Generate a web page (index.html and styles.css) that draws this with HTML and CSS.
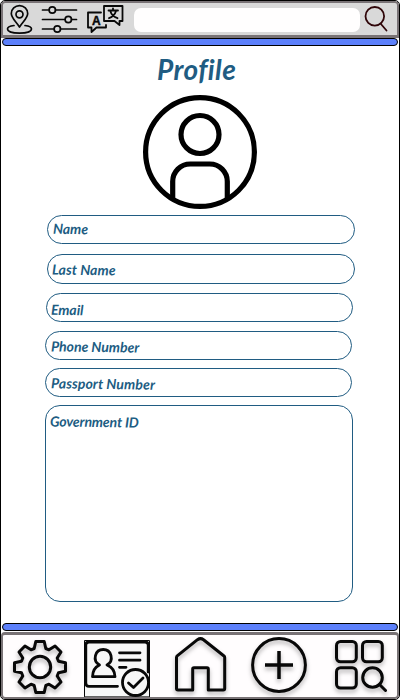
FILE: index.html
```html
<!DOCTYPE html>
<html lang="en">
<head>
<meta charset="utf-8">
<title>Profile</title>
<link rel="stylesheet" href="styles.css">
</head>
<body>
<div class="phone">
  <header class="topbar">
    <svg class="tools" width="130" height="32" viewBox="3 3 130 32" aria-hidden="true">
      <g class="line thin">
        <path d="M19.500 27C16 21.500 11.300 18 11.300 13.500a8.200 7.900 0 0 1 16.400 0C27.700 18 23 21.500 19.500 27Z"/>
        <circle cx="19.500" cy="14.300" r="3.500"/>
        <path d="M14 25.500C9.500 26 7.500 27.500 7.500 29c0 2.500 5 4.200 12 4.200s12-1.700 12-4.200c0-1.500-2-3-6.500-3.500"/>
        <path d="M42.500 10H49M55.500 10H76.500M42.500 19.500H65M71.500 19.500H76.500M42.500 29H54M60.500 29H76.500"/>
        <circle cx="52.300" cy="10" r="3.200"/><circle cx="68.300" cy="19.500" r="3.200"/><circle cx="57.300" cy="29" r="3.200"/>
      </g>
      <g class="line translate">
        <path d="M101 12.500H88V27.500H91.500V32L96.500 27.500H106V25"/>
        <path d="M104 6H122.500V21H119.500V25L114.500 21H104Z"/>
        <path d="M108.500 10.500H118M113 8.500V10.500M116 11C115 14.500 112 17 109 18.200M110.500 11.500C111.500 15 114 17 117.500 18.200"/>
      </g>
      <text class="letter" x="92" y="24.500">A</text>
    </svg>
    <div class="search"></div>
    <svg class="magnifier" width="26" height="28" viewBox="363 5 26 28" aria-hidden="true">
      <circle cx="374.800" cy="16.300" r="9.300"/>
      <path d="M380.500 23.500L386.500 30.500"/>
    </svg>
  </header>
  <div class="stripe"></div>

  <main class="profile">
    <h1>Profile</h1>
    <svg class="avatar" width="114" height="114" viewBox="0 0 114 114" aria-hidden="true">
      <circle cx="57" cy="57" r="54.400"/>
      <circle cx="57" cy="39.500" r="19"/>
      <path d="M29.700 104V86.500A17.500 17.500 0 0 1 47.200 69H66.800A17.500 17.500 0 0 1 84.300 86.500V104"/>
    </svg>
    <div class="field name"><span>Name</span></div>
    <div class="field last"><span>Last Name</span></div>
    <div class="field email"><span>Email</span></div>
    <div class="field phone-no"><span>Phone Number</span></div>
    <div class="field passport"><span>Passport Number</span></div>
    <div class="field government"><span>Government ID</span></div>
  </main>

  <div class="stripe"></div>
  <nav class="bottombar">
    <svg class="icon gear" width="56" height="62" viewBox="12 635 56 62" aria-hidden="true">
      <g transform="translate(40 667)">
        <path d="M-5.800-18.500L-4.200-25.500H4.200L5.800-18.500 8.980-17.200 15.060-21 21-15.060 17.200-8.980 18.500-5.800 25.500-4.200V4.200L18.500 5.800 17.200 8.980 21 15.060 15.060 21 8.980 17.200 5.800 18.500 4.200 25.500H-4.200L-5.800 18.500-8.980 17.200-15.060 21-21 15.060-17.200 8.980-18.500 5.800-25.500 4.200V-4.200L-18.500-5.800-17.200-8.980-21-15.060-15.060-21-8.980-17.200Z"/>
        <circle r="10.700"/>
      </g>
    </svg>
    <svg class="icon card" width="66" height="57" viewBox="84 640 66 57" aria-hidden="true">
      <path class="box" d="M84.500 696.500V640.500H149.500V696.500Z"/>
      <path d="M117.500 686.300H89Q85.800 686.300 85.800 683V645Q85.800 642 89 642H145Q148.200 642 148.200 645V672"/>
      <path d="M119.500 652.800H140M119.500 660.200H140M119.500 667.300H126"/>
      <path d="M99.500 665C92 660.500 95 649.500 103.200 649.500S114.500 660.500 107 665C112 667 114.800 670.500 115 676.700H92.500C92.700 670.500 95 667 99.500 665Z"/>
      <circle cx="135.500" cy="682.500" r="13"/>
      <path d="M128.500 683L133.500 687.500 143 678"/>
    </svg>
    <svg class="icon home" width="54" height="60" viewBox="173 635 54 60" aria-hidden="true">
      <path d="M176.500 688.500V657.500Q176.500 656.500 177.500 655.700L197.500 639.700Q200.500 637.500 203.500 639.700L223.700 655.700Q224.700 656.500 224.700 657.500V688.500Q224.700 690 223.200 690H208.300V669Q208.300 667.700 207 667.700H194Q192.700 667.700 192.700 669V690H178Q176.500 690 176.500 688.500Z"/>
    </svg>
    <svg class="icon plus" width="58" height="60" viewBox="250 635 58 60" aria-hidden="true">
      <circle cx="279" cy="665" r="26.400"/>
      <path d="M265 665H293M279 651V679"/>
    </svg>
    <svg class="icon grid" width="56" height="62" viewBox="333 635 56 62" aria-hidden="true">
      <rect x="336.500" y="641.500" width="19.800" height="20.300" rx="4"/>
      <rect x="362.500" y="641.500" width="19.800" height="20.300" rx="4"/>
      <rect x="336.500" y="667.700" width="19.800" height="20.300" rx="4"/>
      <circle cx="372.500" cy="677.500" r="9.800"/>
      <path d="M379.500 684.500L385.500 690.500"/>
    </svg>
  </nav>
</div>
</body>
</html>
```
FILE: styles.css
```css
* { box-sizing: border-box; }
body { margin: 0; background: #fff; overflow: hidden; }
svg { display: block; flex: none; }
.phone {
  width: 400px;
  height: 700px;
  border: 1px solid #000;
  border-radius: 5px;
  display: flex;
  flex-direction: column;
  overflow: hidden;
  font-family: Lato, "Liberation Sans", sans-serif;
  color: #205c82;
}
.topbar {
  height: 37px;
  flex: none;
  border: 2px solid #797376;
  border-bottom-width: 3px;
  border-radius: 4px 4px 0 0;
  background: #d9d9d9;
  display: flex;
}
.line { fill: none; stroke: #080808; stroke-linecap: round; stroke-linejoin: round; }
.thin { stroke-width: 1.7; }
.translate { stroke-width: 1.8; }
.letter { font: bold 12px "Liberation Sans", sans-serif; fill: #080808; stroke: #080808; stroke-width: 0.4; }
.search {
  width: 226px;
  height: 24px;
  margin: 5px 3px 0 1px;
  background: #fffefe;
  border-radius: 7px;
}
.magnifier { margin-top: 2px; fill: none; stroke: #300609; stroke-width: 1.8; stroke-linecap: round; }
.stripe {
  height: 8px;
  flex: none;
  margin: 0 1px;
  background: #5c80fb;
  border: 1px solid #000;
  border-radius: 4px;
}
.profile {
  height: 577px;
  flex: none;
  display: flex;
  flex-direction: column;
  padding-left: 44px;
}
h1 {
  width: 84px;
  height: 36px;
  margin: 5px 0 8px 112px;
  font-size: 28px;
  font-weight: 700;
  font-style: italic;
  line-height: 36px;
  letter-spacing: 0.4px;
  white-space: nowrap;
}
.avatar { margin-left: 98px; fill: none; stroke: #000; stroke-width: 5.2; }
.field {
  width: 307px;
  height: 29px;
  flex: none;
  border: 1px solid #205c82;
  border-radius: 15px;
  font-size: 14px;
  font-weight: 700;
  font-style: italic;
  line-height: 18px;
  white-space: nowrap;
  padding: 4px 0 0 5px;
}
.field span { display: inline-block; transform: rotate(0.8deg); }
.name { width: 308px; margin: 6px 0 0 2px; }
.last { width: 308px; height: 30px; margin: 10px 0 0 2px; padding: 6px 0 0 4px; letter-spacing: 0.1px; }
.email { margin: 9px 0 0 1px; padding: 7px 0 0 4px; }
.phone-no { margin-top: 9px; padding-top: 6px; }
.passport { margin-top: 8px; padding-top: 6px; letter-spacing: 0.12px; }
.government { width: 308px; height: 197px; margin-top: 8px; padding: 7px 0 0 4px; letter-spacing: -0.1px; }
.bottombar {
  height: 67px;
  flex: none;
  margin-top: 1px;
  border: 3px solid #797376;
  border-width: 3px 2px 2px;
  border-radius: 4px;
  background: #fffdfe;
  display: flex;
  padding-left: 9px;
}
.icon {
  fill: none;
  stroke: #080808;
  stroke-width: 3;
  stroke-linejoin: round;
  stroke-linecap: round;
  filter: drop-shadow(0 3px 2px rgba(0, 0, 0, .3));
}
.card { margin: 5px 23px 0 16px; stroke-width: 2.8; background: #f7f7f7; filter: none; }
.card .box { stroke-width: 1; }
.plus { margin: 0 25px 0 23px; stroke-linecap: butt; }
.plus path { stroke-width: 3.5; }
```
